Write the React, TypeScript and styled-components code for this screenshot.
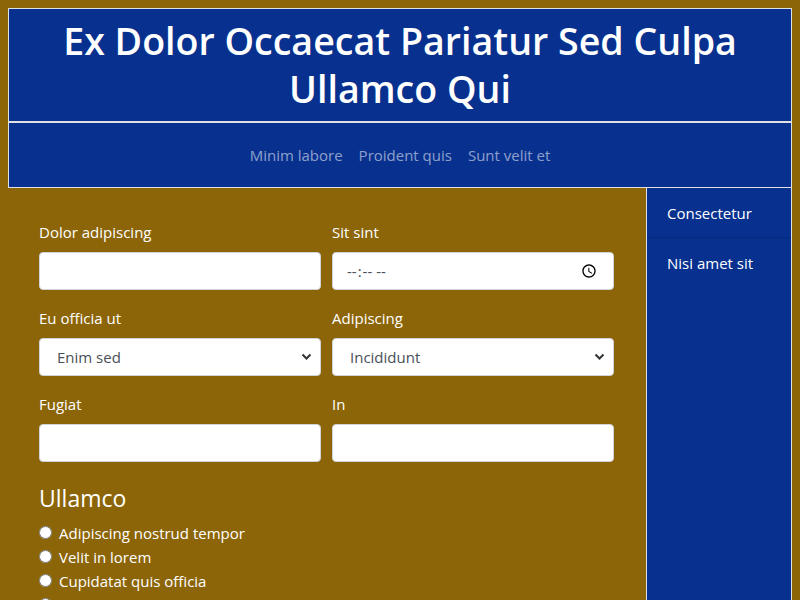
import React from "react";
import styled, { createGlobalStyle } from "styled-components";

const Global = createGlobalStyle`
  html, body { margin: 0; padding: 0; }
  body {
    margin: 8px;
    background: #8c6508;
    font-family: "Open Sans", "Noto Sans", sans-serif;
    font-size: 16px;
    line-height: 1.5;
    color: #fff;
    overflow: hidden;
  }
  * { box-sizing: border-box; }
`;

const Header = styled.header`
  background: #08318f;
  border: 1px solid #dee2e6;
`;

const Title = styled.h1`
  margin: 0;
  padding: 8px 16px;
  text-align: center;
  font-size: 37.6px;
  line-height: 48px;
  font-weight: 600;
  color: #fff;
  border-bottom: 2px solid #dee2e6;
`;

const Nav = styled.nav`
  display: flex;
  justify-content: center;
  padding: 20px 0;
`;

const NavLink = styled.a`
  padding: 0 8px;
  line-height: 24px;
  color: rgba(255, 255, 255, 0.55);
  text-decoration: none;
  font-size: 15px;
`;

const Body = styled.div`
  display: grid;
  grid-template-columns: 638px 146px;
  min-height: 600px;
`;

const Main = styled.main`
  padding: 32px 0 0 31px;
`;

const FormGrid = styled.div`
  display: grid;
  grid-template-columns: 282px 282px;
  column-gap: 11px;
  row-gap: 16px;
`;

const Field = styled.div`
  display: flex;
  flex-direction: column;
`;

const Label = styled.label`
  line-height: 24px;
  margin-bottom: 8px;
  font-size: 15px;
`;

const Input = styled.input`
  height: 38px;
  width: 100%;
  border: 1px solid #ced4da;
  border-radius: 4px;
  background: #fff;
  padding: 6px 13px;
  font-family: "Open Sans", "Noto Sans", sans-serif;
  font-size: 15px;
  color: #495057;
`;

const SelectWrap = styled.div`
  position: relative;
`;

const Select = styled.select`
  appearance: none;
  height: 38px;
  width: 100%;
  border: 1px solid #ced4da;
  border-radius: 4px;
  background: #fff;
  padding: 6px 30px 6px 17px;
  font-family: "Open Sans", "Noto Sans", sans-serif;
  font-size: 15px;
  color: #495057;
`;

const Chevron = styled.svg`
  position: absolute;
  right: 9px;
  top: 15px;
  pointer-events: none;
`;

const SectionTitle = styled.h2`
  margin: 22px 0 8px;
  font-size: 23px;
  line-height: 29px;
  font-weight: 400;
`;

const RadioList = styled.div`
  display: flex;
  flex-direction: column;
`;

const RadioRow = styled.label`
  display: flex;
  align-items: center;
  line-height: 24px;
  font-size: 15px;
`;

const Radio = styled.input`
  margin: 0 7px 2px 0;
  width: 13px;
  height: 13px;
`;

const Aside = styled.aside`
  background: #08318f;
  border-left: 1px solid #dee2e6;
  border-right: 1px solid #dee2e6;
`;

const SideItem = styled.a<{ $last?: boolean }>`
  display: block;
  padding: 13px 20px 12px;
  line-height: 24px;
  font-size: 15px;
  color: #fff;
  text-decoration: none;
  border-bottom: 1px solid ${(p) => (p.$last ? "transparent" : "rgba(0,0,0,0.15)")};
`;

function SelectField({ label, value }: { label: string; value: string }) {
  return (
    <Field>
      <Label>{label}</Label>
      <SelectWrap>
        <Select defaultValue={value}>
          <option>{value}</option>
        </Select>
        <Chevron width="11" height="8" viewBox="0 0 11 8">
          <path d="M1.5 1.5 L5.5 5.5 L9.5 1.5" fill="none" stroke="#333" strokeWidth="2" />
        </Chevron>
      </SelectWrap>
    </Field>
  );
}

export default function App() {
  return (
    <>
      <Global />
      <Header>
        <Title>Ex Dolor Occaecat Pariatur Sed Culpa Ullamco Qui</Title>
        <Nav>
          <NavLink href="#">Minim labore</NavLink>
          <NavLink href="#">Proident quis</NavLink>
          <NavLink href="#">Sunt velit et</NavLink>
        </Nav>
      </Header>
      <Body>
        <Main>
          <FormGrid>
            <Field>
              <Label>Dolor adipiscing</Label>
              <Input type="text" />
            </Field>
            <Field>
              <Label>Sit sint</Label>
              <Input type="time" />
            </Field>
            <SelectField label="Eu officia ut" value="Enim sed" />
            <SelectField label="Adipiscing" value="Incididunt" />
            <Field>
              <Label>Fugiat</Label>
              <Input type="text" />
            </Field>
            <Field>
              <Label>In</Label>
              <Input type="text" />
            </Field>
          </FormGrid>
          <SectionTitle>Ullamco</SectionTitle>
          <RadioList>
            {["Adipiscing nostrud tempor", "Velit in lorem", "Cupidatat quis officia", "Aute sint"].map((t) => (
              <RadioRow key={t}>
                <Radio type="radio" name="r" />
                {t}
              </RadioRow>
            ))}
          </RadioList>
        </Main>
        <Aside>
          <SideItem href="#">Consectetur</SideItem>
          <SideItem href="#" $last>Nisi amet sit</SideItem>
        </Aside>
      </Body>
    </>
  );
}
